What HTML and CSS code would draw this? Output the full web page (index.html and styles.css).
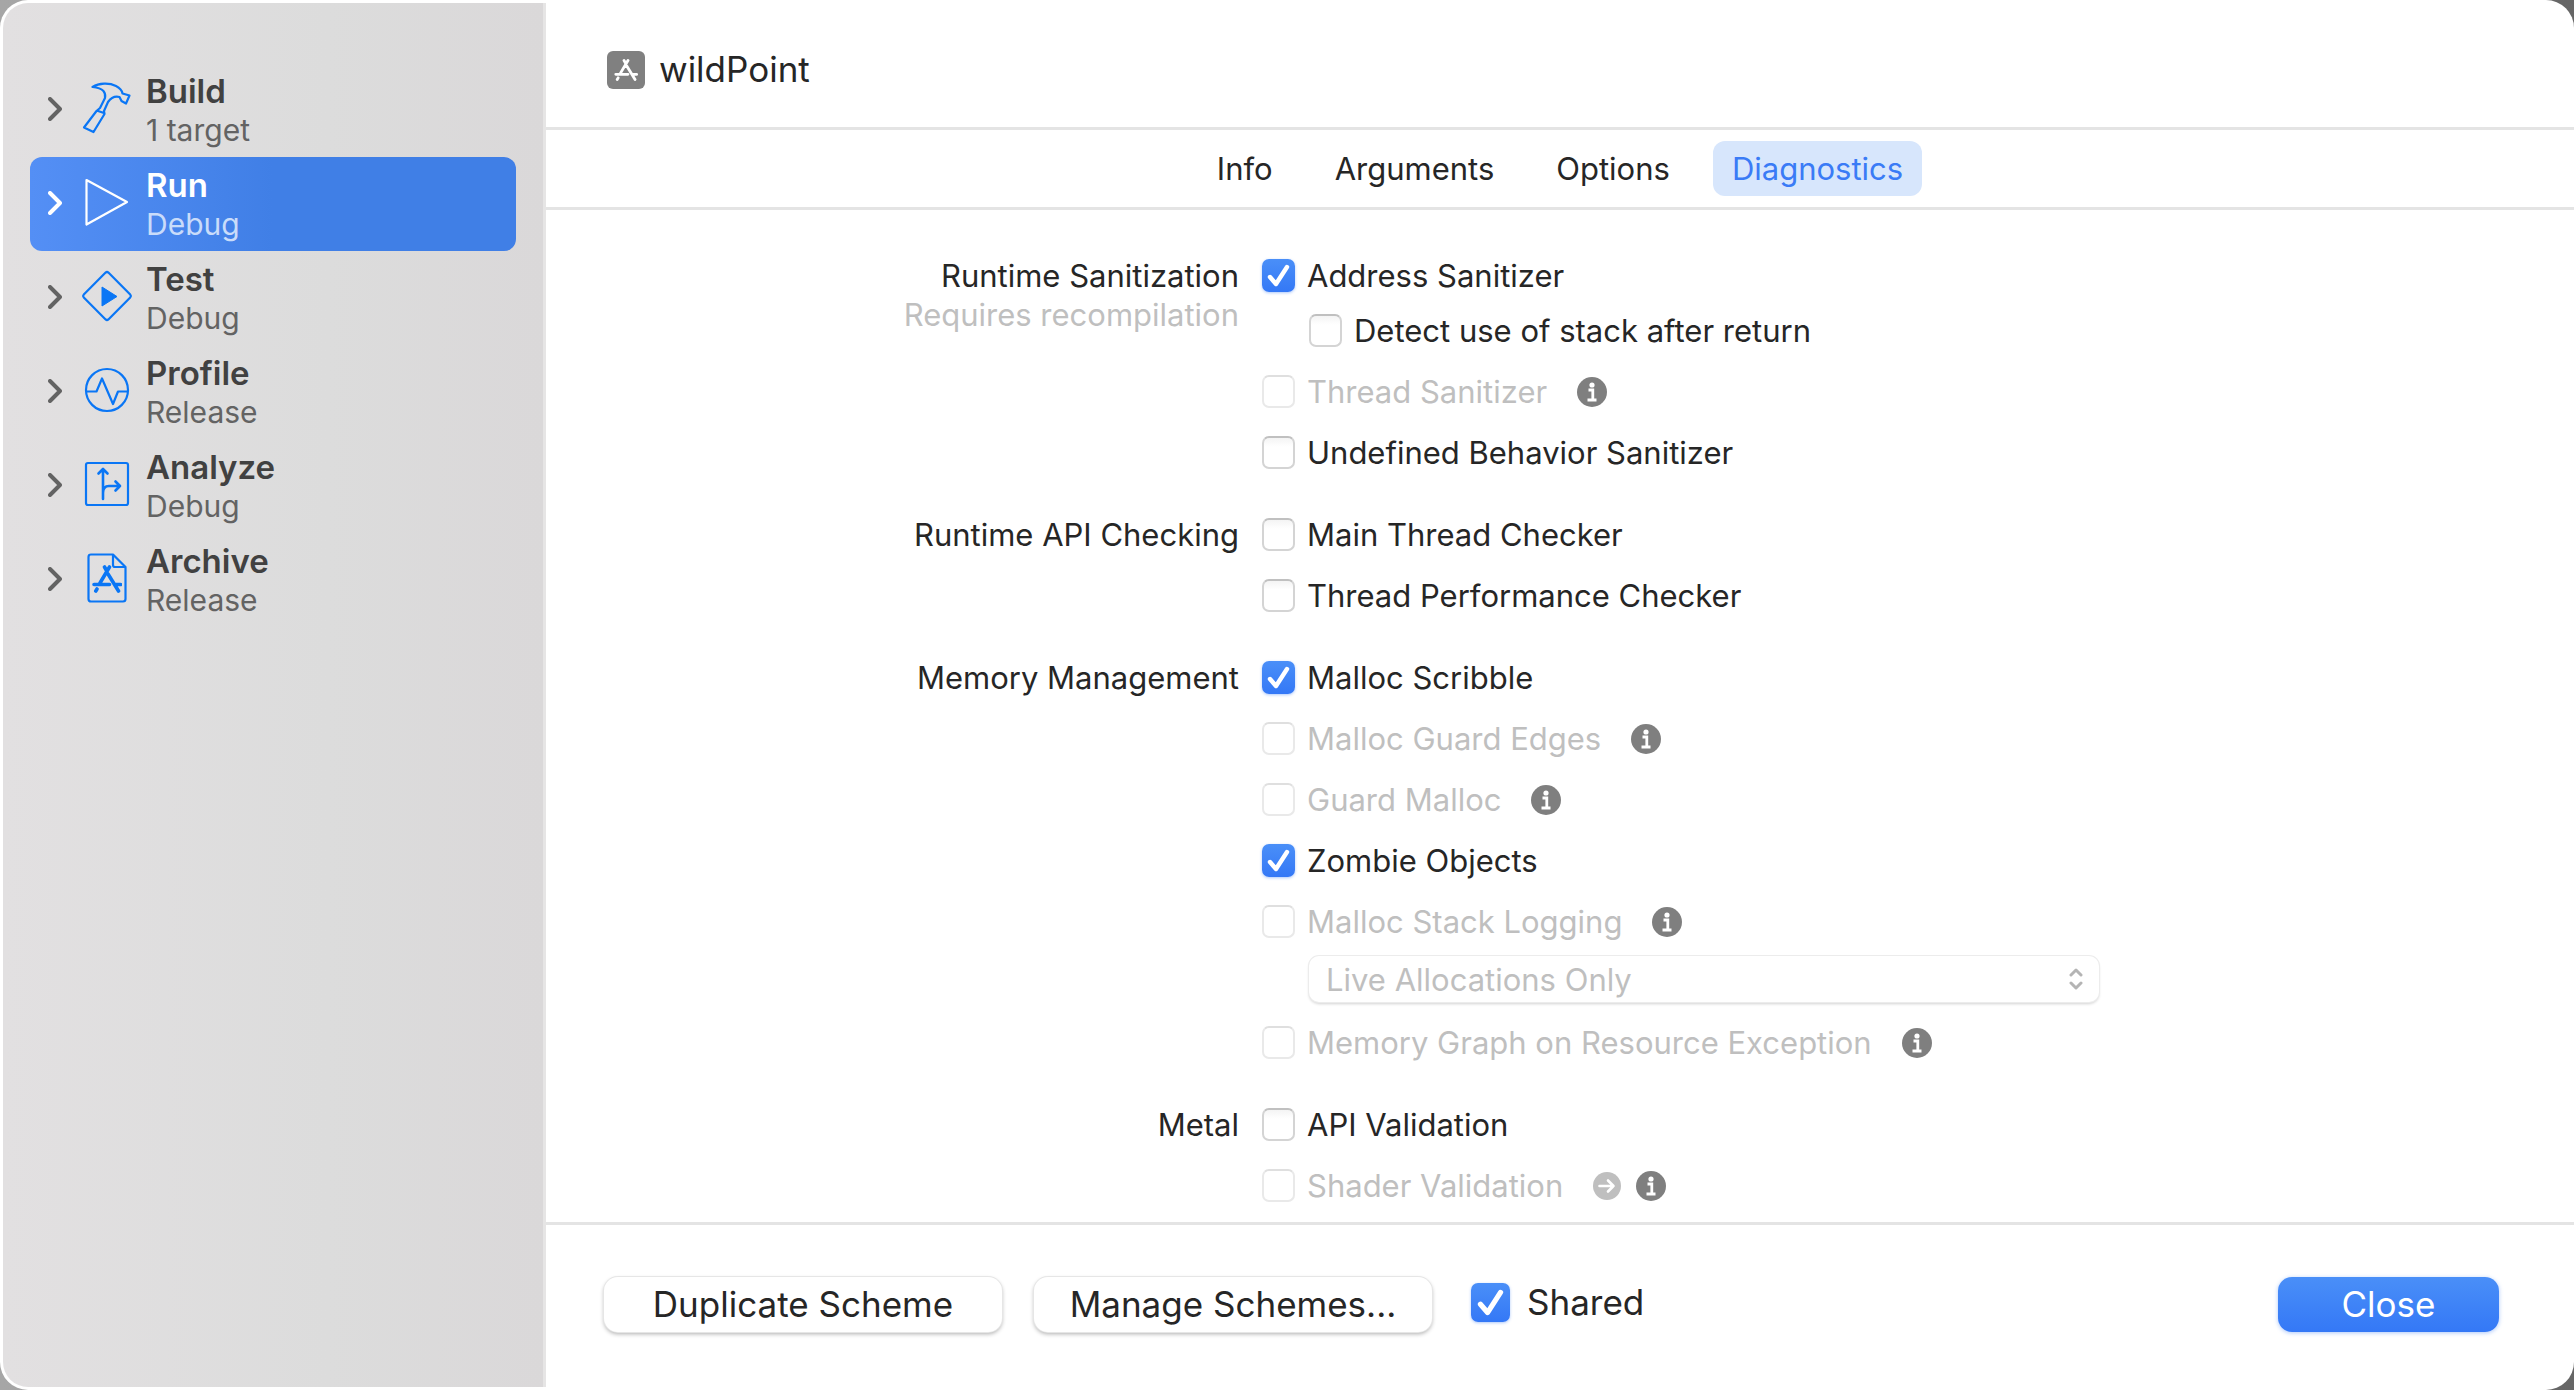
FILE: index.html
```html
<!DOCTYPE html>
<html lang="en">
<head>
<meta charset="utf-8">
<title>wildPoint scheme</title>
<link rel="stylesheet" href="styles.css">
</head>
<body>
<svg class="defs" aria-hidden="true">
  <symbol id="chevron" viewBox="0 0 14 24"><path d="M2 2l10 10L2 22" fill="none" stroke="currentColor" stroke-width="4" stroke-linecap="round" stroke-linejoin="round"/></symbol>
  <symbol id="tick" viewBox="0 0 33 33"><path d="M8 18l6 7L25 8" fill="none" stroke="#fff" stroke-width="4.400" stroke-linecap="round" stroke-linejoin="round"/></symbol>
  <symbol id="appstore" viewBox="0 0 30 28"><path d="M17.500 2L8 18M12.500 2l2 3.500M16 9l10.500 17M2 19.500h15.500M24 19.500h4.500M5 24l-1.200 2" fill="none" stroke="currentColor" stroke-width="3.600" stroke-linecap="round"/></symbol>
  <symbol id="info" viewBox="0 0 30 30"><circle cx="15" cy="15" r="15" fill="#7f7f7f"/><circle cx="15" cy="8" r="2.600" fill="#fff"/><path d="M11.500 13h4.300v9.500M10.500 23h9" fill="none" stroke="#fff" stroke-width="2.800"/></symbol>
  <symbol id="arrow" viewBox="0 0 28 28"><circle cx="14" cy="14" r="14" fill="#bfbfbf"/><path d="M6.500 14h14M15 8.500l5.500 5.500-5.500 5.500" fill="none" stroke="#fff" stroke-width="2.600" stroke-linecap="round" stroke-linejoin="round"/></symbol>
</svg>
<div class="window">
  <nav class="sidebar" aria-label="Scheme actions">
    <a class="action" href="#build">
      <svg class="chevron"><use href="#chevron"/></svg>
      <svg class="glyph" viewBox="0 0 50 52"><path d="M10.500 5C17 1 27 .5 34 4c4 2 6 4.500 6.500 7.500l7 2-3.500 8-4.500-2.500-2-4c-4-1-8 0-11.500 5l-4 9 .5 3L11.500 50 2 45.500 14.500 29l3.500-3 5-10c1-5-1-10-12.500-11zM14.500 28.500l7.500 2.500" fill="none" stroke="currentColor" stroke-width="2.200" stroke-linejoin="round"/></svg>
      <span class="names"><strong>Build</strong><span>1 target</span></span>
    </a>
    <a class="action selected" href="#run" aria-current="page">
      <svg class="chevron"><use href="#chevron"/></svg>
      <svg class="glyph" viewBox="0 0 50 52"><path d="M4.500 4L45 26 4.500 48.500z" fill="none" stroke="currentColor" stroke-width="2.200" stroke-linejoin="round"/></svg>
      <span class="names"><strong>Run</strong><span>Debug</span></span>
    </a>
    <a class="action" href="#test">
      <svg class="chevron"><use href="#chevron"/></svg>
      <svg class="glyph" viewBox="0 0 50 52"><path d="M23.600 2.600q1.400-1.200 2.800 0l21.800 22q1.200 1.400 0 2.800l-21.800 22q-1.400 1.200-2.800 0l-21.800-22q-1.200-1.400 0-2.800z" fill="none" stroke="currentColor" stroke-width="2.200"/><path d="M20 17l15 9.500L20 36z" fill="currentColor" stroke="currentColor"/></svg>
      <span class="names"><strong>Test</strong><span>Debug</span></span>
    </a>
    <a class="action" href="#profile">
      <svg class="chevron"><use href="#chevron"/></svg>
      <svg class="glyph" viewBox="0 0 50 52"><g fill="none" stroke="currentColor" stroke-width="2.200" stroke-linejoin="round"><circle cx="25" cy="26" r="21"/><path d="M4 27.500h10.500l5.500-13 11 25.500 5-12.500h10"/></g></svg>
      <span class="names"><strong>Profile</strong><span>Release</span></span>
    </a>
    <a class="action" href="#analyze">
      <svg class="chevron"><use href="#chevron"/></svg>
      <svg class="glyph" viewBox="0 0 50 52"><g fill="none" stroke="currentColor" stroke-width="2.200" stroke-linejoin="round" stroke-linecap="round"><rect x="4" y="5" width="42" height="42" rx="2"/><path d="M21 41V11M16.500 15.500L21 11l4.500 4.500M21 35c0-5 2-7 6-7h11M33.500 23.500L38 28l-4.500 4.500" stroke-width="2.600"/></g></svg>
      <span class="names"><strong>Analyze</strong><span>Debug</span></span>
    </a>
    <a class="action" href="#archive">
      <svg class="chevron"><use href="#chevron"/></svg>
      <svg class="glyph" viewBox="0 0 50 52"><path d="M9 2.500h22L43.500 15v32q0 2.500-2.500 2.500H9q-2.500 0-2.500-2.500V5Q6.500 2.500 9 2.500zM31 3v10q0 2 2 2h10" fill="none" stroke="currentColor" stroke-width="2.200" stroke-linejoin="round"/><use href="#appstore" x="10" y="13" width="30" height="28"/></svg>
      <span class="names"><strong>Archive</strong><span>Release</span></span>
    </a>
  </nav>

  <main class="main">
    <header class="title">
      <span class="app-icon"><svg><use href="#appstore"/></svg></span>
      <h1>wildPoint</h1>
    </header>
    <div class="tabs" role="tablist">
      <button role="tab" type="button">Info</button>
      <button role="tab" type="button">Arguments</button>
      <button role="tab" type="button">Options</button>
      <button role="tab" type="button" class="active" aria-selected="true">Diagnostics</button>
    </div>

    <form class="settings" id="settings">
      <section class="group">
        <h2>Runtime Sanitization<small>Requires recompilation</small></h2>
        <div class="options">
          <div class="option has-child"><label><span class="box"><input type="checkbox" checked><svg><use href="#tick"/></svg></span>Address Sanitizer</label></div>
          <div class="option child"><label><span class="box"><input type="checkbox"></span>Detect use of stack after return</label></div>
          <div class="option"><label><span class="box"><input type="checkbox" disabled></span>Thread Sanitizer</label><button class="help" type="button" aria-label="About Thread Sanitizer"><svg><use href="#info"/></svg></button></div>
          <div class="option"><label><span class="box"><input type="checkbox"></span>Undefined Behavior Sanitizer</label></div>
        </div>
      </section>
      <section class="group">
        <h2>Runtime API Checking</h2>
        <div class="options">
          <div class="option"><label><span class="box"><input type="checkbox"></span>Main Thread Checker</label></div>
          <div class="option"><label><span class="box"><input type="checkbox"></span>Thread Performance Checker</label></div>
        </div>
      </section>
      <section class="group">
        <h2>Memory Management</h2>
        <div class="options">
          <div class="option"><label><span class="box"><input type="checkbox" checked><svg><use href="#tick"/></svg></span>Malloc Scribble</label></div>
          <div class="option"><label><span class="box"><input type="checkbox" disabled></span>Malloc Guard Edges</label><button class="help" type="button" aria-label="About Malloc Guard Edges"><svg><use href="#info"/></svg></button></div>
          <div class="option"><label><span class="box"><input type="checkbox" disabled></span>Guard Malloc</label><button class="help" type="button" aria-label="About Guard Malloc"><svg><use href="#info"/></svg></button></div>
          <div class="option"><label><span class="box"><input type="checkbox" checked><svg><use href="#tick"/></svg></span>Zombie Objects</label></div>
          <div class="option"><label><span class="box"><input type="checkbox" disabled></span>Malloc Stack Logging</label><button class="help" type="button" aria-label="About Malloc Stack Logging"><svg><use href="#info"/></svg></button></div>
          <div class="popup">
            <select aria-label="Malloc stack logging mode" disabled><option>Live Allocations Only</option></select>
            <svg viewBox="0 0 14 22"><path d="M2 7l5-5 5 5M2 15l5 5 5-5" fill="none" stroke="#b4b4b4" stroke-width="3" stroke-linecap="round" stroke-linejoin="round"/></svg>
          </div>
          <div class="option"><label><span class="box"><input type="checkbox" disabled></span>Memory Graph on Resource Exception</label><button class="help" type="button" aria-label="About Memory Graph"><svg><use href="#info"/></svg></button></div>
        </div>
      </section>
      <section class="group">
        <h2>Metal</h2>
        <div class="options">
          <div class="option"><label><span class="box"><input type="checkbox"></span>API Validation</label></div>
          <div class="option"><label><span class="box"><input type="checkbox" disabled></span>Shader Validation</label><span class="helps"><button class="go" type="button" aria-label="Shader Validation options" disabled><svg><use href="#arrow"/></svg></button><button class="help" type="button" aria-label="About Shader Validation"><svg><use href="#info"/></svg></button></span></div>
        </div>
      </section>
    </form>

    <footer class="footer">
      <button class="push" type="button">Duplicate Scheme</button>
      <button class="push" type="button">Manage Schemes...</button>
      <label class="shared"><span class="box"><input type="checkbox" checked><svg><use href="#tick"/></svg></span>Shared</label>
      <button class="push primary" type="button">Close</button>
    </footer>
  </main>
</div>
</body>
</html>
```
FILE: styles.css
```css
* { box-sizing: border-box; }

body {
  margin: 0;
  background: linear-gradient(90deg, #a6a6a6, #666);
  color: #262626;
  font: 31px/39px Inter, "Liberation Sans", sans-serif;
}

.defs { display: none; }
svg { display: block; }

button, select, input { margin: 0; font: inherit; color: inherit; }
button { border: 0; padding: 0; background: none; }

.window {
  display: grid;
  grid-template-columns: 546px 1fr;
  min-height: 100vh;
  border-radius: 28px;
  overflow: hidden;
  background: #fff;
}

/* Sidebar */
.sidebar {
  margin: 3px 0 3px 3px;
  padding: 60px 27px;
  border-right: 3px solid #e6e5e5;
  border-radius: 25px 0 0 25px;
  background: linear-gradient(90deg, #e2e0e1, #dcdcdc 60%, #dad8d9);
}

.action {
  display: flex;
  align-items: center;
  height: 94px;
  padding: 0 18px;
  border-radius: 12px;
  color: #636363;
  font-size: 30px;
  text-decoration: none;
}

.chevron { width: 14px; height: 24px; margin-bottom: 2px; }
.glyph { width: 50px; height: 52px; margin: 0 14px 4px 20px; color: #0a76f5; }
.names { display: grid; padding-top: 2px; }
.names strong { color: #414141; font-size: 33px; font-weight: 600; }

.selected { background: linear-gradient(90deg, #548ff5, #407fe6 50%); color: #c9dcfa; }
.selected .chevron, .selected .glyph, .selected strong { color: #fff; }

/* Title and tabs */
.main { display: flex; flex-direction: column; }

.title {
  display: flex;
  align-items: center;
  gap: 14px;
  height: 130px;
  padding: 12px 61px 0;
  border-bottom: 3px solid #e4e4e4;
}

.title h1 { margin: 0; font-size: 35px; font-weight: 400; }

.app-icon {
  display: grid;
  place-items: center;
  width: 38px;
  height: 38px;
  border-radius: 6px;
  background: #808080;
  color: #fff;
}
.app-icon svg { width: 24px; height: 22px; }

.tabs {
  display: flex;
  justify-content: center;
  align-items: center;
  gap: 24px;
  height: 80px;
  border-bottom: 3px solid #e4e4e4;
}
.tabs button { height: 55px; padding: 0 19px; border-radius: 12px; }
.tabs .active { background: #d7e6fc; color: #3a7bf6; }

/* Settings */
.settings { flex: 1; display: grid; align-content: start; gap: 49px; padding: 49px 0 20px; }

.group { display: grid; grid-template-columns: 693fr 1312fr; column-gap: 23px; }
.group h2 { margin: -3px 0; font-size: inherit; font-weight: 400; text-align: right; }
.group small { display: block; font-size: inherit; color: #bfbfbf; }

.option { display: flex; align-items: center; gap: 30px; height: 33px; margin-bottom: 28px; }
.option:last-child { margin-bottom: 0; }
.option label { display: flex; align-items: center; gap: 12px; }
.option label:has(:disabled) { color: #bfbfbf; }
.has-child { margin-bottom: 22px; }
.child { padding-left: 47px; }

.box { display: grid; width: 33px; height: 33px; }
.box > * { grid-area: 1 / 1; width: 100%; height: 100%; }
.box svg { z-index: 1; pointer-events: none; }

input[type="checkbox"] {
  appearance: none;
  border: 2px solid #d4d4d4;
  border-top-color: #c0c0c0;
  border-radius: 7px;
  background: linear-gradient(#f4f4f4, #fff 30%);
}
input[type="checkbox"]:disabled { border-color: #e9e9e9; border-top-color: #dfdfdf; background: #fff; }
input[type="checkbox"]:checked {
  border: 0;
  background: linear-gradient(#4a8ff8, #3478f6);
  box-shadow: 0 1px 3px #3478f666;
}

.helps { display: flex; align-items: center; gap: 15px; }
.help svg { width: 30px; height: 30px; }
.go svg { width: 28px; height: 28px; }

.popup { display: grid; align-items: center; width: 790px; margin: -10px 0 24px 47px; }
.popup > * { grid-area: 1 / 1; }
.popup select {
  appearance: none;
  height: 46px;
  padding: 0 17px;
  border: 0;
  border-radius: 10px;
  background: #fff;
  color: #bfbfbf;
  opacity: 1;
  box-shadow: 0 0 0 1px #ececec, 0 2px 3px #0000002e;
}
.popup svg { justify-self: end; width: 14px; height: 22px; margin-right: 16px; pointer-events: none; }

/* Footer */
.footer {
  display: flex;
  align-items: center;
  height: 168px;
  padding: 0 75px 7px 58px;
  border-top: 3px solid #e4e4e4;
  font-size: 35px;
}

.push {
  width: 398px;
  height: 55px;
  margin-right: 32px;
  border-radius: 14px;
  background: #fff;
  box-shadow: 0 0 0 1px #e6e6e6, 0 2px 4px #00000052;
}
.shared { display: flex; align-items: center; gap: 17px; margin: 0 0 3px 7px; }
.shared .box { width: 39px; height: 39px; }

.primary {
  width: 221px;
  margin: 0 0 0 auto;
  background: linear-gradient(#4a8ff8, #3478f6);
  color: #fff;
  box-shadow: 0 1px 4px #3478f666;
}
```
